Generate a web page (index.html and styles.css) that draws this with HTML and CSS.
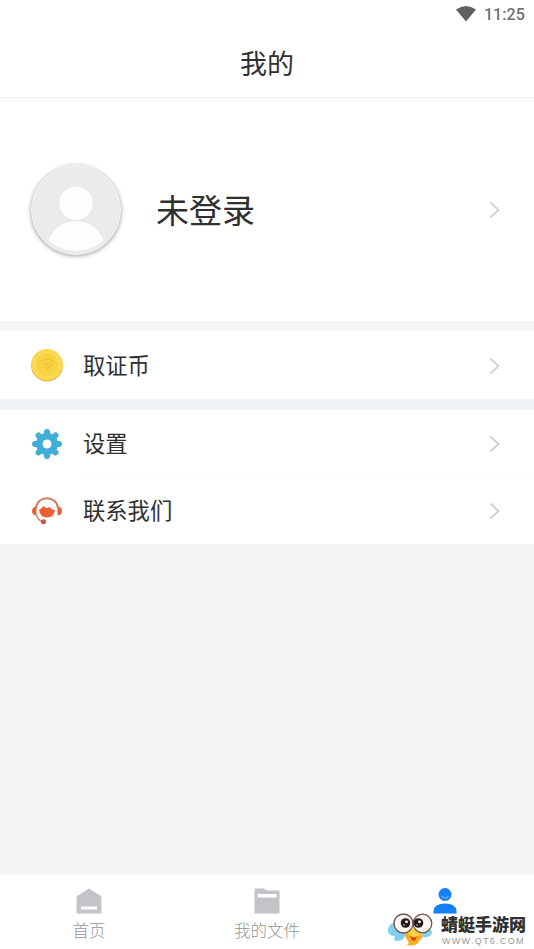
FILE: index.html
```html
<!DOCTYPE html>
<html lang="zh-CN">
<head>
<meta charset="utf-8">
<title>我的</title>
<link rel="stylesheet" href="styles.css">
</head>
<body>
<div class="screen">
  <div class="status">
    <svg class="wifi" viewBox="0 0 20 16"><path d="M0 3.5Q10-3.500 20 3.500L10 15.500Z"/></svg>
    <span>11:25</span>
  </div>
  <header class="header">我的</header>
  <section class="profile">
    <div class="avatar">
      <svg viewBox="0 0 90 90"><circle cx="45" cy="38" r="17"/><path d="M17 76C22 63 32 56.500 45 56.500S68 63 73 76Q61 87 45 87T17 76Z"/></svg>
    </div>
    <h1 class="name">未登录</h1>
    <svg class="chevron" viewBox="0 0 12 18"><path d="M1.500 1.500 9.500 9 1.500 16.500"/></svg>
  </section>
  <section class="group">
    <div class="row coin-row">
      <svg class="icon" viewBox="0 0 34 34">
        <circle cx="17" cy="16.500" r="16" fill="#e9bd45"/>
        <circle cx="17" cy="15.500" r="15.500" fill="#fbd84f"/>
        <circle cx="17" cy="15.500" r="12" fill="#f9d340" stroke="#fadf68"/>
        <path d="M10 13Q17 7 24 13M12 15h10l-4 4M16 15q0 5 3 6" fill="none" stroke="#edbf40" stroke-width="1.200"/>
      </svg>
      <span class="label">取证币</span>
      <svg class="chevron" viewBox="0 0 12 18"><path d="M1.500 1.500 9.500 9 1.500 16.500"/></svg>
    </div>
  </section>
  <section class="group second">
    <div class="row">
      <svg class="icon" viewBox="0 0 34 34">
        <g stroke="#41aed7" stroke-width="6" stroke-linecap="round"><path d="M17 5v24M5 17h24M8.500 8.500l17 17M25.500 8.500l-17 17"/></g>
        <circle cx="17" cy="17" r="11" fill="#41aed7"/><circle cx="17" cy="17" r="4.500" fill="#fff"/>
      </svg>
      <span class="label">设置</span>
      <svg class="chevron" viewBox="0 0 12 18"><path d="M1.500 1.500 9.500 9 1.500 16.500"/></svg>
    </div>
    <div class="row contact">
      <svg class="icon" viewBox="0 0 34 34">
        <path d="M6 14C7 1 27 1 28 14" fill="none" stroke="#d9775c" stroke-width="1.800"/>
        <path d="M6.500 12.500v9Q2 21 2 17t4.500-4.500ZM27.500 12.500v9Q32 21 32 17t-4.500-4.500Z" fill="#df623d"/>
        <path d="M9 16Q12 14 13.500 12q2.500 3 5 1.500l1-.5q1.500 2.500 5.500 3-1 7.500-8 7.500T9 16Z" fill="#ee6034"/>
        <path d="M6.500 20.500q1 6 6.500 7" fill="none" stroke="#d9775c" stroke-width="1.500"/>
        <circle cx="13.500" cy="27.700" r="2.500" fill="#c85540"/>
      </svg>
      <span class="label">联系我们</span>
      <svg class="chevron" viewBox="0 0 12 18"><path d="M1.500 1.500 9.500 9 1.500 16.500"/></svg>
    </div>
  </section>
  <nav class="tabs">
    <div class="tab">
      <svg viewBox="0 0 26 26"><path fill="#c4c4c8" d="M13 0.500 24 7.500Q25.500 8.500 25.500 10V25.500H.5V10Q.5 8.500 2 7.500Z"/><path fill="#fff" d="M5 18.500h16v3H5z"/></svg>
      <span>首页</span>
    </div>
    <div class="tab">
      <svg viewBox="0 0 26 26"><path fill="#c4c4c8" d="M.5.500H10l3 2h12.500v23H.5Z"/><path fill="#fff" d="M3.500 6h19v3.500h-19z"/></svg>
      <span>我的文件</span>
    </div>
    <div class="tab">
      <svg viewBox="0 0 26 26"><circle cx="13" cy="6.500" r="6.500" fill="#157ef8"/><path d="M9.500 8q3.500 4 7 0" fill="none" stroke="#50b4fc" stroke-width="1.500"/><path d="M1.500 25.500V23Q2 15.500 13 15.500T24.500 23v2.500Z" fill="#157ef8"/></svg>
    </div>
  </nav>
  <div class="watermark">
    <svg viewBox="0 0 46 36">
      <path d="M8 10Q0 13 1 20q1 4 7 4-2 4 1 5 8 1 12-10ZM36 18q9-3 9 3-1 5-10 4Z" fill="#83d0ee"/>
      <path d="M19 21Q25 13 33 20q5 5-1 9-2 6-13 4 4-1 2-4-4-4-2-8Z" fill="#f9ae1c"/>
      <path d="M20 20q7-8 14 0-1 5-6 5t-8-5Z" fill="#fcd044"/>
      <path d="M23 24q4 3 7 0l-2 5q-4 0-5-5Z" fill="#df3a20"/>
      <circle cx="16.500" cy="11.500" r="9.500" fill="#fff8f2" stroke="#70534a" stroke-width="1.300"/>
      <circle cx="35.500" cy="11.500" r="9.300" fill="#fff8f2" stroke="#70534a" stroke-width="1.300"/>
      <circle cx="18.500" cy="11" r="4.800" fill="#241c1c"/><circle cx="31.500" cy="11" r="4.800" fill="#241c1c"/>
      <circle cx="19.500" cy="9.800" r="1.400" fill="#fff"/><circle cx="32.500" cy="9.800" r="1.400" fill="#fff"/>
      <circle cx="17" cy="13" r=".8" fill="#ddd"/><circle cx="30" cy="13" r=".8" fill="#ddd"/>
    </svg>
    <div class="brand"><b>蜻蜓手游网</b><small>WWW.QT6.COM</small></div>
  </div>
</div>
</body>
</html>
```
FILE: styles.css
```css
* { box-sizing: border-box; }
body { margin: 0; font-family: Roboto, "Noto Sans CJK SC", sans-serif; color: #303030; }
svg { display: block; flex: none; }
.screen { position: relative; height: 949px; display: flex; flex-direction: column; background: #f5f5f5; overflow: hidden; }
.status { height: 28px; background: #fff; display: flex; justify-content: flex-end; align-items: center; gap: 8px; padding-right: 9px; font-size: 16px; font-weight: 500; letter-spacing: .1px; color: #707070; }
.wifi { width: 20px; height: 16px; fill: #606060; }
.header { height: 70px; background: #fff; border-bottom: 1px solid #efefef; display: flex; align-items: center; justify-content: center; font-size: 27px; }
.profile { height: 223px; background: #fff; display: flex; align-items: center; padding: 0 33px 0 31px; }
.avatar { width: 90px; height: 90px; border-radius: 50%; background: #ebebeb; border: 1px solid #f4f4f4; box-shadow: 0 1px 4px rgba(0,0,0,.4); }
.avatar svg { width: 88px; height: 88px; fill: #fdfdfd; }
.name { margin: 0 0 0 35px; font-size: 33px; font-weight: 400; flex: 1; line-height: 48px; padding-top: 4px; }
.chevron { width: 12px; height: 18px; margin-left: auto; fill: none; stroke: #d0d0d0; stroke-width: 1.800; }
.group { background: #fff; margin-top: 10px; }
.second { margin-top: 0; border-top: 11px solid #eff3f7; }
.row { height: 67px; display: flex; align-items: center; padding: 0 33px 0 30px; }
.coin-row { height: 68px; padding-top: 1px; }
.contact { position: relative; }
.contact::before { content: ""; position: absolute; left: 82px; right: 0; top: 0; height: 1px; background: #f9f9f9; }
.icon { width: 34px; height: 34px; }
.label { margin-left: 19px; font-size: 22.300px; line-height: 32px; padding-top: 1px; }
.tabs { margin-top: auto; height: 74px; background: #fff; display: grid; grid-template-columns: repeat(3, 1fr); }
.tab { display: flex; flex-direction: column; align-items: center; padding-top: 13px; font-size: 16.500px; color: #969696; font-weight: 300; }
.tab svg { width: 26px; height: 26px; }
.tab span { line-height: 24px; margin-top: 6px; }
.watermark { position: absolute; left: 387px; top: 912px; display: flex; gap: 8px; }
.watermark svg { width: 46px; height: 36px; }
.brand { display: flex; flex-direction: column; white-space: nowrap; padding-top: 1px; }
.brand b { font-size: 17px; line-height: 24px; font-weight: 900; color: #303030; }
.brand small { font-family: "Liberation Sans", sans-serif; font-size: 9px; line-height: 8px; letter-spacing: 1.300px; padding-left: 1px; color: #999; }
```
